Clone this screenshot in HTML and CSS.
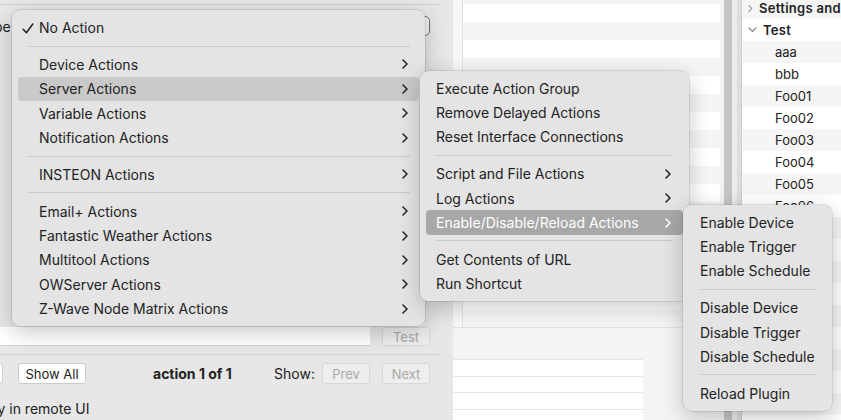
FILE: index.html
```html
<!DOCTYPE html>
<html lang="en">
<head>
    <meta charset="UTF-8">
    <title>Action Type Menu</title>
    <link rel="stylesheet" href="styles.css">
</head>
<body>
    <div class="window">
        <section class="editor">
            <div class="rule top-rule"></div>
            <div class="type-row">
                <span class="type-label">Type</span>
                <div class="popup"></div>
            </div>
            <div class="spacer"></div>
            <div class="script-row">
                <div class="field"></div>
                <button class="btn disabled test-btn">Test</button>
            </div>
            <div class="rule mid-rule"></div>
            <div class="nav-row">
                <button class="btn cut-btn"></button>
                <button class="btn showall-btn">Show All</button>
                <span class="status">action 1 of 1</span>
                <span class="show-label">Show:</span>
                <button class="btn disabled prev-btn">Prev</button>
                <button class="btn disabled next-btn">Next</button>
            </div>
            <div class="remote-row"><span class="remote-label">Only in remote UI</span></div>
        </section>

        <section class="table-pane">
            <div class="table-top">
                <div class="strip"></div>
                <div class="rows">
                    <div class="row"></div><div class="row"></div><div class="row"></div><div class="row"></div>
                    <div class="row"></div><div class="row"></div><div class="row"></div><div class="row"></div>
                    <div class="row"></div><div class="row"></div><div class="row"></div><div class="row"></div>
                    <div class="row"></div><div class="row"></div><div class="row"></div><div class="row"></div>
                    <div class="row"></div><div class="row"></div><div class="row"></div><div class="row"></div>
                </div>
            </div>
            <div class="table-bottom">
                <div class="mini-table">
                    <div class="mini-row"></div>
                    <div class="mini-row"></div>
                    <div class="mini-row"></div>
                    <div class="mini-row"></div>
                </div>
            </div>
        </section>

        <div class="scroller">
            <div class="sc-a"></div>
            <div class="sc-b"></div>
            <div class="sc-c"></div>
            <div class="sc-d"></div>
        </div>

        <aside class="outline">
            <div class="o-row group">
                <svg class="disclose" width="6" height="9" viewBox="0 0 6 9"><path d="M1 1l3.5 3.5L1 8" fill="none" stroke="currentColor" stroke-width="1.2" stroke-linecap="round" stroke-linejoin="round"/></svg>
                <span>Settings and</span>
            </div>
            <div class="o-row group">
                <svg class="disclose" width="9" height="6" viewBox="0 0 9 6"><path d="M1 1l3.5 3.5L8 1" fill="none" stroke="currentColor" stroke-width="1.2" stroke-linecap="round" stroke-linejoin="round"/></svg>
                <span>Test</span>
            </div>
            <div class="o-row leaf">aaa</div>
            <div class="o-row leaf">bbb</div>
            <div class="o-row leaf">Foo01</div>
            <div class="o-row leaf">Foo02</div>
            <div class="o-row leaf">Foo03</div>
            <div class="o-row leaf">Foo04</div>
            <div class="o-row leaf">Foo05</div>
            <div class="o-row leaf">Foo06</div>
            <div class="o-row leaf">Foo07</div>
            <div class="o-row leaf">Foo08</div>
            <div class="o-row leaf">Foo09</div>
            <div class="o-row leaf">Foo10</div>
            <div class="o-row leaf">Foo11</div>
            <div class="o-row leaf">Foo12</div>
            <div class="o-row leaf">Foo13</div>
            <div class="o-row leaf">Foo14</div>
            <div class="o-row leaf">Foo15</div>
            <div class="o-row leaf">Foo16</div>
        </aside>
    </div>

    <!-- action type popup menu -->
    <div class="menu main-menu">
        <div class="item checked">
            <svg class="check" width="12" height="11" viewBox="0 0 12 11"><path d="M1.2 6.2L4.4 9.8L10.8 1" fill="none" stroke="currentColor" stroke-width="1.5" stroke-linecap="round" stroke-linejoin="round"/></svg>
            No Action
        </div>
        <div class="sep"></div>
        <div class="item sub">Device Actions<svg class="chev" width="6" height="10" viewBox="0 0 6 10"><path d="M1 1l4 4-4 4" fill="none" stroke="currentColor" stroke-width="1.6" stroke-linecap="round" stroke-linejoin="round"/></svg></div>
        <div class="item sub open">Server Actions<svg class="chev" width="6" height="10" viewBox="0 0 6 10"><path d="M1 1l4 4-4 4" fill="none" stroke="currentColor" stroke-width="1.6" stroke-linecap="round" stroke-linejoin="round"/></svg></div>
        <div class="item sub">Variable Actions<svg class="chev" width="6" height="10" viewBox="0 0 6 10"><path d="M1 1l4 4-4 4" fill="none" stroke="currentColor" stroke-width="1.6" stroke-linecap="round" stroke-linejoin="round"/></svg></div>
        <div class="item sub">Notification Actions<svg class="chev" width="6" height="10" viewBox="0 0 6 10"><path d="M1 1l4 4-4 4" fill="none" stroke="currentColor" stroke-width="1.6" stroke-linecap="round" stroke-linejoin="round"/></svg></div>
        <div class="sep"></div>
        <div class="item sub">INSTEON Actions<svg class="chev" width="6" height="10" viewBox="0 0 6 10"><path d="M1 1l4 4-4 4" fill="none" stroke="currentColor" stroke-width="1.6" stroke-linecap="round" stroke-linejoin="round"/></svg></div>
        <div class="sep"></div>
        <div class="item sub">Email+ Actions<svg class="chev" width="6" height="10" viewBox="0 0 6 10"><path d="M1 1l4 4-4 4" fill="none" stroke="currentColor" stroke-width="1.6" stroke-linecap="round" stroke-linejoin="round"/></svg></div>
        <div class="item sub">Fantastic Weather Actions<svg class="chev" width="6" height="10" viewBox="0 0 6 10"><path d="M1 1l4 4-4 4" fill="none" stroke="currentColor" stroke-width="1.6" stroke-linecap="round" stroke-linejoin="round"/></svg></div>
        <div class="item sub">Multitool Actions<svg class="chev" width="6" height="10" viewBox="0 0 6 10"><path d="M1 1l4 4-4 4" fill="none" stroke="currentColor" stroke-width="1.6" stroke-linecap="round" stroke-linejoin="round"/></svg></div>
        <div class="item sub">OWServer Actions<svg class="chev" width="6" height="10" viewBox="0 0 6 10"><path d="M1 1l4 4-4 4" fill="none" stroke="currentColor" stroke-width="1.6" stroke-linecap="round" stroke-linejoin="round"/></svg></div>
        <div class="item sub">Z-Wave Node Matrix Actions<svg class="chev" width="6" height="10" viewBox="0 0 6 10"><path d="M1 1l4 4-4 4" fill="none" stroke="currentColor" stroke-width="1.6" stroke-linecap="round" stroke-linejoin="round"/></svg></div>
    </div>

    <div class="menu server-menu">
        <div class="item">Execute Action Group</div>
        <div class="item">Remove Delayed Actions</div>
        <div class="item">Reset Interface Connections</div>
        <div class="sep"></div>
        <div class="item sub">Script and File Actions<svg class="chev" width="6" height="10" viewBox="0 0 6 10"><path d="M1 1l4 4-4 4" fill="none" stroke="currentColor" stroke-width="1.6" stroke-linecap="round" stroke-linejoin="round"/></svg></div>
        <div class="item sub">Log Actions<svg class="chev" width="6" height="10" viewBox="0 0 6 10"><path d="M1 1l4 4-4 4" fill="none" stroke="currentColor" stroke-width="1.6" stroke-linecap="round" stroke-linejoin="round"/></svg></div>
        <div class="item sub active">Enable/Disable/Reload Actions<svg class="chev" width="6" height="10" viewBox="0 0 6 10"><path d="M1 1l4 4-4 4" fill="none" stroke="currentColor" stroke-width="1.6" stroke-linecap="round" stroke-linejoin="round"/></svg></div>
        <div class="sep"></div>
        <div class="item">Get Contents of URL</div>
        <div class="item">Run Shortcut</div>
    </div>

    <div class="menu enable-menu">
        <div class="item">Enable Device</div>
        <div class="item">Enable Trigger</div>
        <div class="item">Enable Schedule</div>
        <div class="sep"></div>
        <div class="item">Disable Device</div>
        <div class="item">Disable Trigger</div>
        <div class="item">Disable Schedule</div>
        <div class="sep"></div>
        <div class="item">Reload Plugin</div>
    </div>
</body>
</html>
```

FILE: styles.css
```css
body {
    margin: 0;
    width: 841px;
    height: 420px;
    overflow: hidden;
    position: relative;
    font-family: Inter, "Liberation Sans", sans-serif;
    font-size: 14px;
    color: #222;
    background-color: #e7e7e7;
}
.window {
    display: flex;
    height: 420px;
}

/* left editor pane */
.editor {
    width: 453px;
    flex: none;
    display: flex;
    flex-direction: column;
    overflow: hidden;
    background-color: #e7e7e7;
}
.rule {
    width: 440px;
    height: 1px;
    background-color: #d2d2d2;
}
.top-rule {
    margin-top: 4px;
}
.type-row {
    display: flex;
    align-items: center;
    width: 430px;
    height: 20px;
    margin-top: 11px;
}
.type-label {
    margin-left: -22px;
    width: 40px;
    flex: none;
}
.popup {
    flex: 1;
    height: 18px;
    margin-left: 10px;
    border: 1.5px solid #6c6c6c;
    border-radius: 5px;
    background-color: #f2f2f2;
}
.spacer {
    flex: 1;
}
.script-row {
    display: flex;
    height: 19px;
    width: 430px;
    justify-content: space-between;
}
.field {
    width: 370px;
    background-color: #fff;
    border-bottom: 1px solid #d4d4d4;
    box-sizing: border-box;
}
.btn {
    font-family: inherit;
    font-size: 13px;
    color: #222;
    background-color: #fff;
    border: 1px solid #cbcbcb;
    border-radius: 3px;
    padding: 0;
    box-sizing: border-box;
}
.btn.disabled {
    color: #a9a9a9;
    background-color: #eeeeee;
    border-color: #d8d8d8;
}
.test-btn {
    width: 48px;
}
.mid-rule {
    margin-top: 8px;
}
.nav-row {
    display: flex;
    align-items: center;
    width: 430px;
    height: 21px;
    margin-top: 8px;
}
.nav-row .btn {
    height: 21px;
    flex: none;
}
.cut-btn {
    width: 43px;
    margin-left: -40px;
}
.showall-btn {
    width: 68px;
    margin-left: 15px;
}
.status {
    font-weight: 700;
    margin-left: 67px;
}
.show-label {
    margin-left: auto;
}
.prev-btn {
    width: 48px;
    margin-left: 7px;
}
.next-btn {
    width: 48px;
    margin-left: 12px;
}
.remote-row {
    height: 36px;
    padding-top: 15px;
    box-sizing: border-box;
    line-height: 20px;
    white-space: nowrap;
}
.remote-label {
    margin-left: -25px;
}

/* middle table */
.table-pane {
    width: 267px;
    flex: none;
    display: flex;
    flex-direction: column;
    background-color: #f4f4f4;
}
.table-top {
    height: 327px;
    display: flex;
    overflow: hidden;
    border-bottom: 1px solid #e2e2e2;
    flex: none;
}
.strip {
    width: 9px;
    background-color: #f7f7f7;
    border-right: 1px solid #e1e1e1;
}
.rows {
    flex: 1;
    margin-top: -14px;
}
.row {
    height: 18px;
    background-color: #fff;
}
.row:nth-child(odd) {
    background-color: #f4f5f5;
}
.table-bottom {
    flex: 1;
    padding-top: 31px;
}
.mini-table {
    width: 190px;
    background-color: #fff;
}
.mini-row {
    height: 15.5px;
    border-top: 1px solid #e4e4e4;
}

/* splitter + scrollbar */
.scroller {
    width: 21px;
    flex: none;
    display: flex;
}
.sc-a { width: 4px; background-color: #f2f2f2; }
.sc-b { width: 8px; background-color: #c5c5c5; }
.sc-c { width: 5px; background-color: #ececec; }
.sc-d { width: 4px; background-color: #dcdcdc; }

/* outline on the right */
.outline {
    flex: 1;
    background-color: #fff;
    border-left: 1px solid #cdcdcd;
    overflow: hidden;
}
.o-row {
    height: 22px;
    display: flex;
    align-items: center;
    white-space: nowrap;
    font-size: 13px;
}
.o-row:first-child {
    margin-top: -3px;
}
.o-row:nth-child(odd) {
    background-color: #f5f5f5;
}
.o-row.group {
    font-weight: 600;
    padding-left: 6px;
    letter-spacing: 0.3px;
}
.disclose {
    color: #8a8a8a;
    width: 9px;
    margin-right: 6px;
}
.o-row.leaf {
    padding-left: 33px;
}

/* menus */
.menu {
    position: absolute;
    background-color: #e4e4e4;
    border-radius: 8px;
    padding: 5.5px 6px 5px;
    box-shadow: 0 0 0 0.5px rgba(0, 0, 0, 0.18), 0 6px 22px rgba(0, 0, 0, 0.22);
}
.item {
    height: 24.4px;
    display: flex;
    align-items: center;
    border-radius: 4px;
    white-space: nowrap;
    position: relative;
}
.chev {
    margin-left: auto;
    color: #262626;
}
.sep {
    height: 12.4px;
    display: flex;
    align-items: center;
}
.sep::before {
    content: "";
    flex: 1;
    height: 1px;
    background-color: #c9c9c9;
}
.item.open {
    background-color: #c9c9c9;
}
.item.active {
    background-color: #a8a8a8;
    color: #fff;
}
.item.active .chev {
    color: #fff;
}
.check {
    position: absolute;
    left: 4px;
    top: 7px;
}

.main-menu {
    left: 12px;
    top: 10px;
    width: 401px;
}
.main-menu .item {
    padding-left: 21px;
    padding-right: 11px;
}
.main-menu .sep {
    margin: 0 9px 0 10px;
}

.server-menu {
    left: 420px;
    top: 70.5px;
    width: 257px;
}
.server-menu .item {
    padding-left: 10px;
    padding-right: 12px;
}
.server-menu .sep {
    margin: 0 10px;
}

.enable-menu {
    left: 683px;
    top: 204.5px;
    width: 137px;
}
.enable-menu .item {
    padding-left: 11px;
}
.enable-menu .sep {
    margin: 0 11px;
}
```
